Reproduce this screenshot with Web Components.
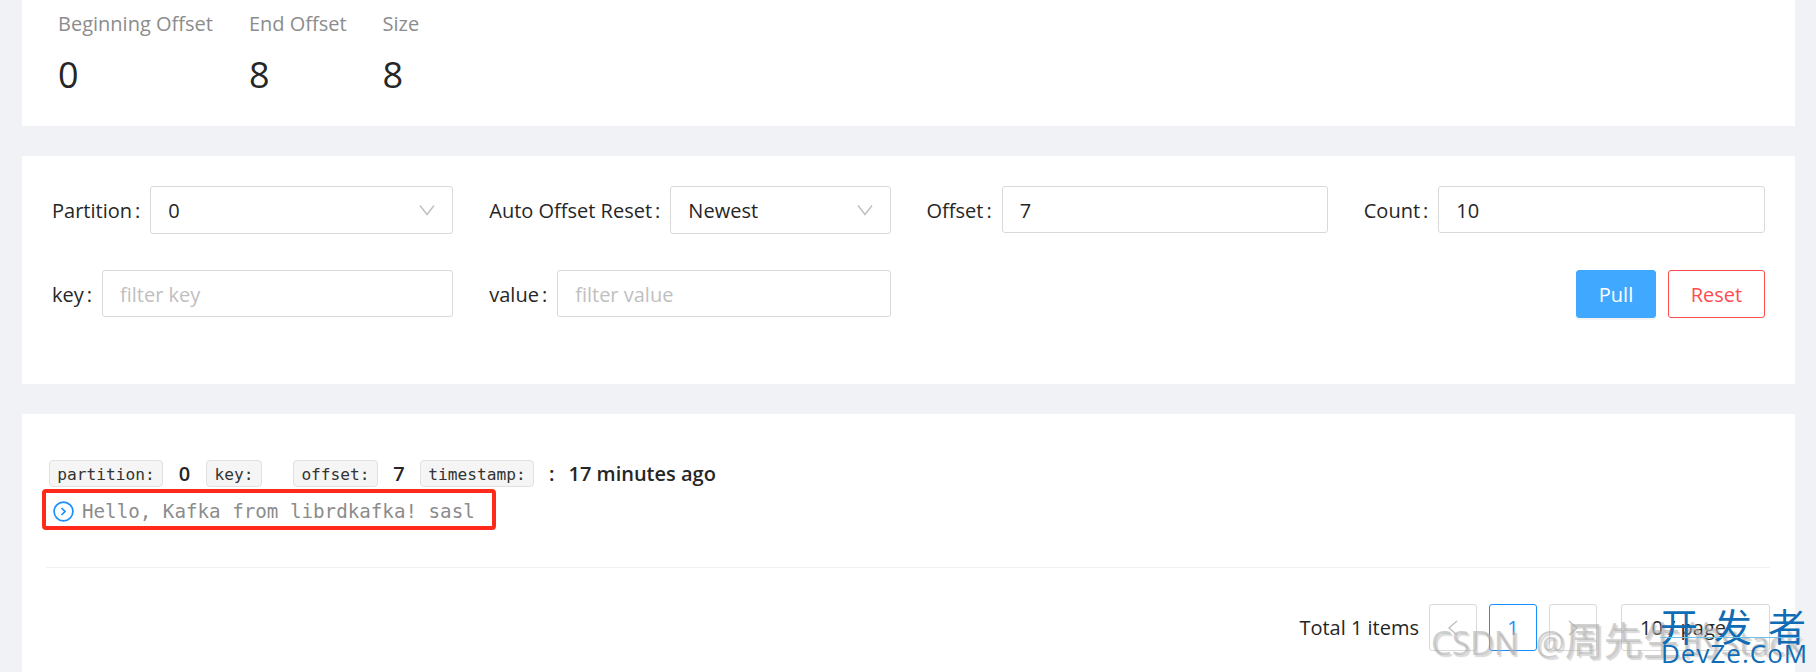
<!doctype html>
<html>
<head>
<meta charset="utf-8">
<style>
html, body { margin: 0; height: 672px; overflow: hidden; background: #f0f2f5; }
body { font-family: "Open Sans", "Noto Sans CJK SC", sans-serif; font-size: 20px; color: #262626; }
</style>
</head>
<body>
<kafka-page>
  <info-card>
    <offset-stat label="Beginning Offset" value="0"></offset-stat>
    <offset-stat label="End Offset" value="8"></offset-stat>
    <offset-stat label="Size" value="8"></offset-stat>
  </info-card>
  <filter-card>
    <form-item label="Partition"><fake-select value="0"></fake-select></form-item>
    <form-item label="Auto Offset Reset"><fake-select value="Newest"></fake-select></form-item>
    <form-item label="Offset"><fake-input value="7"></fake-input></form-item>
    <form-item label="Count"><fake-input value="10"></fake-input></form-item>
    <form-item label="key"><fake-input placeholder="filter key"></fake-input></form-item>
    <form-item label="value"><fake-input placeholder="filter value"></fake-input></form-item>
    <span></span>
    <form-actions></form-actions>
  </filter-card>
  <message-card>
    <message-row></message-row>
    <pager-bar></pager-bar>
  </message-card>
</kafka-page>
<mark-overlay></mark-overlay>

<script>
class KafkaPage extends HTMLElement {
  constructor () {
    super()
    this.attachShadow({ mode: 'open' })
    this.shadowRoot.innerHTML = `
<style>
:host { display: flex; flex-direction: column; gap: 30px; padding: 0 21px 0 22px; height: 672px; box-sizing: border-box; }
</style>
<slot></slot>`
  }
}

class InfoCard extends HTMLElement {
  constructor () {
    super()
    this.attachShadow({ mode: 'open' })
    this.shadowRoot.innerHTML = `
<style>
:host { display: flex; gap: 36px; height: 126px; box-sizing: border-box; padding: 10px 36px 0; background: #fff; }
</style>
<slot></slot>`
  }
}

class OffsetStat extends HTMLElement {
  constructor () {
    super()
    this.attachShadow({ mode: 'open' })
    this.shadowRoot.innerHTML = `
<style>
:host { display: block; }
.label { color: #8c8c8c; font-size: 20px; line-height: 28px; margin-bottom: 12px; }
.value { color: #262626; font-size: 36px; line-height: 50px; }
</style>
<div class="label">${this.getAttribute('label')}</div>
<div class="value">${this.getAttribute('value')}</div>`
  }
}

class FilterCard extends HTMLElement {
  constructor () {
    super()
    this.attachShadow({ mode: 'open' })
    this.shadowRoot.innerHTML = `
<style>
:host { display: grid; grid-template-columns: repeat(4, 1fr); column-gap: 36px; row-gap: 37px; align-content: start;
  height: 228px; box-sizing: border-box; padding: 30px 30px 0; background: #fff; }
</style>
<slot></slot>`
  }
}

class FormItem extends HTMLElement {
  constructor () {
    super()
    this.attachShadow({ mode: 'open' })
    this.shadowRoot.innerHTML = `
<style>
:host { display: flex; align-items: center; height: 47px; }
label { white-space: nowrap; color: #262626; margin-right: 10px; padding-top: 1px; }
i { font-style: normal; margin-left: 3px; }
.box { flex: 1; min-width: 0; }
</style>
<label>${this.getAttribute('label')}<i>:</i></label>
<div class="box"><slot></slot></div>`
  }
}

class FakeSelect extends HTMLElement {
  constructor () {
    super()
    this.attachShadow({ mode: 'open' })
    this.shadowRoot.innerHTML = `
<style>
:host { display: flex; align-items: center; justify-content: space-between; height: 48px; box-sizing: border-box;
  padding: 0 17px; background: #fff; border: 1px solid #d9d9d9; border-radius: 3px; color: #262626; }
span { padding-top: 1px; }
svg { display: block; }
</style>
<span>${this.getAttribute('value')}</span>
<svg width="16" height="12" viewBox="0 0 16 12" fill="none" stroke="#bfbfbf" stroke-width="1.4"><path d="M1 1.5l7 9 7-9"/></svg>`
  }
}

class FakeInput extends HTMLElement {
  constructor () {
    super()
    this.attachShadow({ mode: 'open' })
    const ph = this.getAttribute('placeholder')
    this.shadowRoot.innerHTML = `
<style>
:host { display: flex; align-items: center; height: 47px; box-sizing: border-box;
  padding: 0 17px; background: #fff; border: 1px solid #d9d9d9; border-radius: 3px; color: #262626; }
span { padding-top: 1px; }
.ph { color: #bfbfbf; }
</style>
<span class="${ph ? 'ph' : ''}">${ph || this.getAttribute('value')}</span>`
  }
}

class FormActions extends HTMLElement {
  constructor () {
    super()
    this.attachShadow({ mode: 'open' })
    this.shadowRoot.innerHTML = `
<style>
:host { display: flex; justify-content: flex-end; gap: 12px; height: 48px; }
button { font: inherit; height: 48px; border-radius: 3px; box-sizing: border-box; padding: 0; }
.pull { width: 80px; background: #40a9ff; border: 1px solid #40a9ff; color: #fff; box-shadow: 0 2px 0 rgba(0,0,0,.045); }
.reset { width: 97px; background: #fff; border: 1px solid #ff4d4f; color: #ff4d4f; }
</style>
<button class="pull">Pull</button>
<button class="reset">Reset</button>`
  }
}

class MessageRow extends HTMLElement {
  constructor () {
    super()
    this.attachShadow({ mode: 'open' })
    this.shadowRoot.innerHTML = `
<style>
:host { display: block; position: relative; padding: 46px 0 0 3px; height: 154px; box-sizing: border-box; border-bottom: 1px solid #f0f0f0; margin: 0 25px 0 24px; }
.meta { display: flex; align-items: center; height: 27px; font-weight: 600; font-size: 20px; white-space: nowrap; }
code { display: flex; align-items: center; justify-content: center; height: 27px; padding-top: 2px; font-family: "DejaVu Sans Mono", monospace; font-weight: 400; font-size: 16.2px;
  color: #333; background: #f5f5f5; border: 1px solid #e1e1e1; border-radius: 4px; box-sizing: border-box; }
.body { display: flex; align-items: center; gap: 8px; margin: 12px 0 0 4px; height: 24px; color: #8c8c8c;
  font-family: "DejaVu Sans Mono", monospace; font-size: 19.2px; white-space: nowrap; }
.body svg { display: block; }
.red { position: absolute; left: -4px; top: 75px; width: 446px; height: 33px; border: 4px solid #ff2a1a; border-radius: 4px; }
</style>
<div class="meta">
  <code style="width:114px">partition:</code><span style="width:43px;text-align:center">0</span>
  <code style="width:56px">key:</code><span style="width:31px"></span>
  <code style="width:85px">offset:</code><span style="width:42px;text-align:center">7</span>
  <code style="width:114px">timestamp:</code><span style="margin-left:15px">:</span><span style="margin-left:14px">17 minutes ago</span>
</div>
<div class="body">
  <svg width="21" height="21" viewBox="0 0 21 21" fill="none" stroke="#1890ff" stroke-width="1.7"><circle cx="10.5" cy="10.5" r="9.4"/><path d="M8.5 7l3.5 3.5L8.5 14"/></svg>
  <span>Hello, Kafka from librdkafka! sasl</span>
</div>
<div class="red"></div>`
  }
}

class MessageCard extends HTMLElement {
  constructor () {
    super()
    this.attachShadow({ mode: 'open' })
    this.shadowRoot.innerHTML = `
<style>
:host { display: block; flex: 1; background: #fff; }
</style>
<slot></slot>`
  }
}

class PagerBar extends HTMLElement {
  constructor () {
    super()
    this.attachShadow({ mode: 'open' })
    this.shadowRoot.innerHTML = `
<style>
:host { display: flex; justify-content: flex-end; align-items: center; gap: 12px; padding: 36px 25px 0 0; }
.total { margin-right: -2px; }
.b { display: flex; align-items: center; justify-content: center; width: 48px; height: 47px; box-sizing: border-box;
  border: 1px solid #d9d9d9; border-radius: 3px; background: #fff; }
.cur { border-color: #1890ff; color: #1890ff; }
.size { width: 149px; margin-left: 12px; justify-content: flex-start; padding-left: 18px; }
svg { display: block; }
</style>
<span class="total">Total 1 items</span>
<div class="b"><svg width="12" height="16" viewBox="0 0 12 16" fill="none" stroke="#bfbfbf" stroke-width="1.4"><path d="M10 1L2 8l8 7"/></svg></div>
<div class="b cur">1</div>
<div class="b"><svg width="12" height="16" viewBox="0 0 12 16" fill="none" stroke="#bfbfbf" stroke-width="1.4"><path d="M2 1l8 7-8 7"/></svg></div>
<div class="b size">10 / page</div>`
  }
}

class MarkOverlay extends HTMLElement {
  constructor () {
    super()
    this.attachShadow({ mode: 'open' })
    this.shadowRoot.innerHTML = `
<style>
:host { display: block; position: absolute; left: 0; top: 0; width: 1816px; height: 672px; overflow: hidden; pointer-events: none; }
.csdn { position: absolute; left: 1431px; top: 618px; font-size: 33px; line-height: 40px; word-spacing: 8px; color: rgba(175,175,175,.6); white-space: nowrap;
  text-shadow: 2px 2px 1px rgba(170,170,170,.45); }
.csdn span { font-family: "Noto Sans CJK SC", sans-serif; font-size: 39px; }
.cn { position: absolute; left: 1660px; top: 604px; width: 146px; display: flex; justify-content: space-between; font-family: "Noto Sans CJK SC", sans-serif;
  font-size: 38px; line-height: 42px; color: #0f6cb5; }
.en { position: absolute; left: 1661px; top: 636px; font-size: 26px; line-height: 34px; color: #0f6cb5; letter-spacing: 1px; white-space: nowrap; }
.line { position: absolute; left: 1660px; top: 637px; width: 140px; height: 1px; background: #6fc0e8; }
</style>
<div class="csdn">CSDN @<span>周先生的</span>Stack</div>
<div class="cn"><span>开</span><span>发</span><span>者</span></div>
<div class="line"></div>
<div class="en">DevZe.CoM</div>`
  }
}

customElements.define('kafka-page', KafkaPage)
customElements.define('info-card', InfoCard)
customElements.define('offset-stat', OffsetStat)
customElements.define('filter-card', FilterCard)
customElements.define('form-item', FormItem)
customElements.define('fake-select', FakeSelect)
customElements.define('fake-input', FakeInput)
customElements.define('form-actions', FormActions)
customElements.define('message-row', MessageRow)
customElements.define('message-card', MessageCard)
customElements.define('pager-bar', PagerBar)
customElements.define('mark-overlay', MarkOverlay)
</script>
</body>
</html>
